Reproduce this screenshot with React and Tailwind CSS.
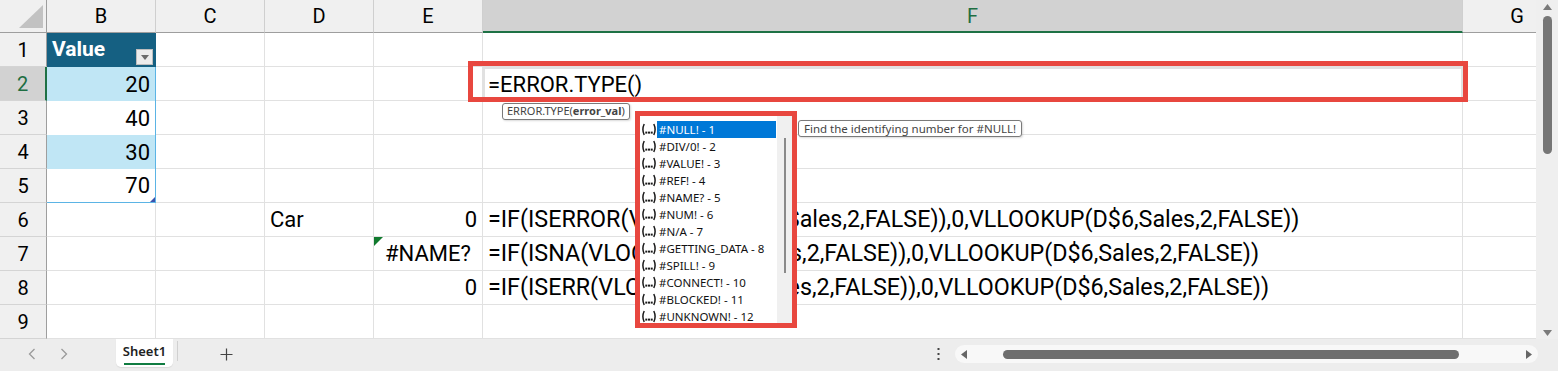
import React from 'react';

const FONT = { fontFamily: 'Roboto, "Liberation Sans", sans-serif' };
const UI = { fontFamily: '"Noto Sans", "Open Sans", sans-serif' };

const formulas = {
  6: '=IF(ISERROR(VLOOKUP(D$6,Sales,2,FALSE)),0,VLLOOKUP(D$6,Sales,2,FALSE))',
  7: '=IF(ISNA(VLOOKUP(D$6,Sales,2,FALSE)),0,VLLOOKUP(D$6,Sales,2,FALSE))',
  8: '=IF(ISERR(VLOOKUP(D$6,Sales,2,FALSE)),0,VLLOOKUP(D$6,Sales,2,FALSE))',
};

const items = [
  '#NULL! - 1',
  '#DIV/0! - 2',
  '#VALUE! - 3',
  '#REF! - 4',
  '#NAME? - 5',
  '#NUM! - 6',
  '#N/A - 7',
  '#GETTING_DATA - 8',
  '#SPILL! - 9',
  '#CONNECT! - 10',
  '#BLOCKED! - 11',
  '#UNKNOWN! - 12',
];

const bValues = { 2: '20', 3: '40', 4: '30', 5: '70' };

function FnIcon() {
  const c = '#1a1a1a';
  return (
    <svg width="16" height="13" viewBox="0 0 16 13" className="shrink-0">
      <path d="M3.2 1 Q0.6 6.5 3.2 12" stroke={c} strokeWidth="1.5" fill="none" />
      <path d="M12.8 1 Q15.4 6.5 12.8 12" stroke={c} strokeWidth="1.5" fill="none" />
      <rect x="4.3" y="8.6" width="2" height="2" fill={c} />
      <rect x="7" y="8.6" width="2" height="2" fill={c} />
      <rect x="9.7" y="8.6" width="2" height="2" fill={c} />
    </svg>
  );
}

function ColHeader({ w, label, selected }) {
  return (
    <div
      className={`shrink-0 h-full flex items-center justify-center text-[20px] border-r border-[#cfcfcf] ${
        selected ? 'bg-[#d2d2d2] text-[#1e6e42] border-b-2 border-b-[#1e7145]' : 'bg-[#f0f0f0] text-black border-b border-b-[#9e9e9e]'
      } ${w}`}
    >
      {label}
    </div>
  );
}

function Cell({ w, className = '', children }) {
  return (
    <div className={`shrink-0 h-full border-r border-b border-[#e1e1e1] flex items-center px-[5px] relative text-[22px] whitespace-nowrap ${w} ${className}`}>
      {children}
    </div>
  );
}

function BCell({ r }) {
  if (r === 1) {
    return (
      <div className="shrink-0 w-[109px] h-full bg-[#156082] text-white font-bold text-[21px] flex items-center pl-[5px] relative border-r border-[#156082]">
        Value
        <div className="absolute right-[2px] bottom-[2px] w-[17px] h-[16px] bg-[#ececec] border border-[#bdbdbd] flex items-center justify-center">
          <svg width="8" height="5" viewBox="0 0 8 5">
            <path d="M0 0 L8 0 L4 5 Z" fill="#6b6b6b" />
          </svg>
        </div>
      </div>
    );
  }
  if (bValues[r]) {
    const shaded = r === 2 || r === 4;
    return (
      <div
        className={`shrink-0 w-[109px] h-full flex items-center justify-end pr-[5px] text-[22px] relative border-r border-[#5bb4e5] ${
          shaded ? 'bg-[#c0e6f5]' : 'bg-white'
        } ${r === 5 ? 'border-b border-b-[#5bb4e5]' : ''}`}
      >
        {bValues[r]}
        {r === 5 && (
          <svg width="5" height="5" viewBox="0 0 5 5" className="absolute right-0 bottom-0">
            <path d="M5 0 L5 5 L0 5 Z" fill="#3b52ad" />
          </svg>
        )}
      </div>
    );
  }
  return <Cell w="w-[109px]" />;
}

function Row({ r }) {
  const sel = r === 2;
  return (
    <div className="flex h-[34px]">
      <div
        className={`shrink-0 w-[47px] h-full flex items-center justify-center text-[20px] border-b border-[#d4d4d4] ${
          sel ? 'bg-[#d2d2d2] text-[#1e6e42] border-r-2 border-r-[#1e7145]' : 'bg-[#f0f0f0] text-black border-r border-r-[#9e9e9e]'
        }`}
      >
        {r}
      </div>
      <BCell r={r} />
      <Cell w="w-[109px]" />
      <Cell w="w-[109px]">{r === 6 ? 'Car' : ''}</Cell>
      <Cell w="w-[109px]" className={r === 7 ? 'justify-center' : 'justify-end'}>
        {r === 6 || r === 8 ? '0' : ''}
        {r === 7 && (
          <>
            <svg width="9" height="9" viewBox="0 0 9 9" className="absolute left-0 top-0">
              <path d="M0 0 L9 0 L0 9 Z" fill="#117a2e" />
            </svg>
            #NAME?
          </>
        )}
      </Cell>
      <Cell
        w="w-[980px]"
        className={
          sel
            ? 'border-t-2 border-l-2 border-r-2 border-b-2 border-[#1e7145] pl-[3px]'
            : formulas[r]
            ? 'text-[23.3px]'
            : ''
        }
      >
        {sel ? '=ERROR.TYPE()' : formulas[r] || ''}
      </Cell>
      <Cell w="w-[109px]" />
    </div>
  );
}

export default function App() {
  const rows = [1, 2, 3, 4, 5, 6, 7, 8, 9];
  return (
    <div className="relative w-[1558px] h-[371px] overflow-hidden bg-white text-black" style={FONT}>
      <div className="flex h-[339px]">
        <div className="w-[1536px] h-full overflow-hidden">
          <div className="flex h-[33px]">
            <div className="shrink-0 w-[47px] h-full bg-[#f0f0f0] border-r border-b border-[#9e9e9e] relative">
              <svg width="25" height="24" viewBox="0 0 25 24" className="absolute left-[19px] top-[5px]">
                <path d="M24 0 L24 23 L0 23 Z" fill="#c2c2c2" />
              </svg>
            </div>
            <ColHeader w="w-[109px]" label="B" />
            <ColHeader w="w-[109px]" label="C" />
            <ColHeader w="w-[109px]" label="D" />
            <ColHeader w="w-[109px]" label="E" />
            <ColHeader w="w-[980px]" label="F" selected />
            <ColHeader w="w-[109px]" label="G" />
          </div>
          {rows.map((r) => (
            <Row key={r} r={r} />
          ))}
        </div>
        {/* vertical scrollbar */}
        <div className="w-[22px] h-full bg-[#efefef] flex flex-col items-center pt-[4px] pb-[3px]">
          <svg width="9" height="6" viewBox="0 0 9 6">
            <path d="M0 6 L9 6 L4.5 0 Z" fill="#7a7a7a" />
          </svg>
          <div className="w-[9px] h-[138px] mt-[6px] rounded-full bg-[#767676]" />
          <div className="flex-1" />
          <svg width="9" height="6" viewBox="0 0 9 6">
            <path d="M0 0 L9 0 L4.5 6 Z" fill="#7a7a7a" />
          </svg>
        </div>
      </div>

      {/* sheet tabs bar */}
      <div className="flex h-[32px] bg-[#ededed]" style={UI}>
        <div className="w-[116px] h-full flex items-center pl-[28px] gap-[24px] pb-[2px]">
          <svg width="8" height="12" viewBox="0 0 8 12">
            <path d="M6.5 1 L1.5 6 L6.5 11" stroke="#9a9a9a" strokeWidth="1.3" fill="none" />
          </svg>
          <svg width="8" height="12" viewBox="0 0 8 12">
            <path d="M1.5 1 L6.5 6 L1.5 11" stroke="#9a9a9a" strokeWidth="1.3" fill="none" />
          </svg>
        </div>
        <div className="w-[57px] h-[28px] bg-white rounded-b-[5px] flex flex-col items-center pt-[3px] shadow-[0_1px_1px_rgba(0,0,0,0.08)]">
          <span className="text-[13px] font-semibold text-[#222] leading-[18px]">Sheet1</span>
          <div className="w-[41px] h-[2px] bg-[#107c41] mt-[3px]" />
        </div>
        <div className="w-px h-[20px] bg-[#d0d0d0] ml-[4px] mt-[2px]" />
        <div className="ml-[42px] h-full flex items-center pb-[2px]">
          <svg width="13" height="13" viewBox="0 0 13 13">
            <path d="M6.5 0.5 V12.5 M0.5 6.5 H12.5" stroke="#444" strokeWidth="1.2" />
          </svg>
        </div>
        <div className="flex-1" />
        <div className="h-full flex items-center pb-[2px]">
          <svg width="3" height="12" viewBox="0 0 3 12" className="mr-[15px]">
            <rect x="0.5" y="0" width="2" height="2" fill="#444" />
            <rect x="0.5" y="5" width="2" height="2" fill="#444" />
            <rect x="0.5" y="10" width="2" height="2" fill="#444" />
          </svg>
          <div className="w-[583px] h-[18px] rounded-full bg-[#f8f8f8] flex items-center pl-[6px] pr-[6px]">
            <svg width="6" height="9" viewBox="0 0 6 9">
              <path d="M6 0 L6 9 L0 4.5 Z" fill="#666" />
            </svg>
            <div className="ml-[36px] w-[456px] h-[9px] rounded-full bg-[#6e6e6e]" />
            <div className="flex-1" />
            <svg width="6" height="9" viewBox="0 0 6 9">
              <path d="M0 0 L0 9 L6 4.5 Z" fill="#666" />
            </svg>
          </div>
        </div>
        <div className="w-[20px]" />
      </div>

      {/* red highlight around F2 */}
      <div className="absolute left-[468px] top-[61px] w-[1000px] h-[41px] border-[5px] border-[#e8473f]" />

      {/* function signature tooltip */}
      <div
        className="absolute left-[502px] top-[103px] h-[17px] px-[4px] flex items-center bg-white border border-[#7a7a7a] rounded-[3px] text-[11px] text-[#444] shadow-[1px_1px_2px_rgba(0,0,0,0.15)] whitespace-nowrap"
        style={UI}
      >
        ERROR.TYPE(<span className="font-bold">error_val</span>)
      </div>

      {/* autocomplete list */}
      <div className="absolute left-[635px] top-[111px] w-[162px] h-[217px] border-[5px] border-[#e8473f] bg-white overflow-hidden" style={UI}>
        <div className="flex h-full">
          <div className="flex-1 pt-[5px]">
            {items.map((t, i) => (
              <div key={t} className="flex items-center h-[17px] pl-px">
                <FnIcon />
                <span
                  className={`h-full flex items-center text-[11.5px] pl-[2px] whitespace-nowrap ${
                    i === 0 ? 'bg-[#0078d7] text-white w-[119px]' : 'text-[#111]'
                  }`}
                >
                  {t}
                </span>
              </div>
            ))}
          </div>
          <div className="w-[15px] h-full bg-[#f0f0f0] flex justify-center pt-[22px]">
            <div className="w-[2px] h-[135px] bg-[#8a8a8a]" />
          </div>
        </div>
      </div>

      {/* item description tooltip */}
      <div
        className="absolute left-[798px] top-[120px] h-[17px] px-[5px] flex items-center bg-white border border-[#7a7a7a] rounded-[3px] text-[11.5px] text-[#444] shadow-[1px_1px_2px_rgba(0,0,0,0.15)] whitespace-nowrap"
        style={UI}
      >
        Find the identifying number for #NULL!
      </div>
    </div>
  );
}
